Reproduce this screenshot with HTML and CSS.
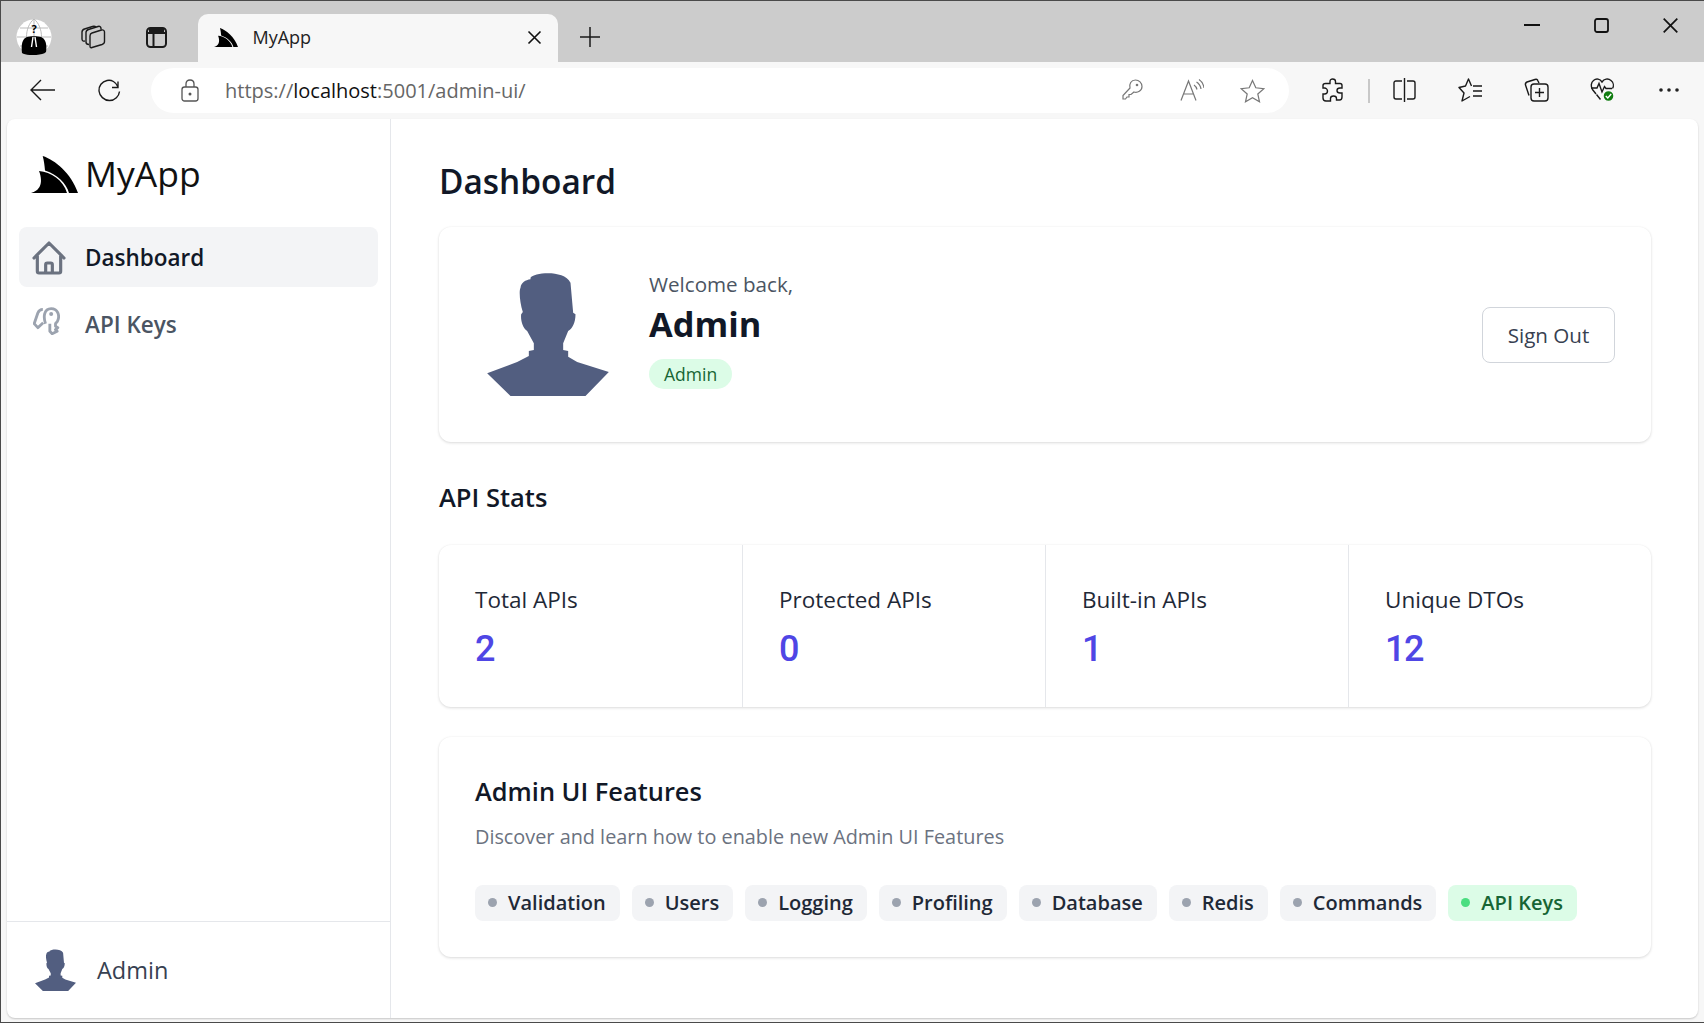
FILE: index.html
```html
<!DOCTYPE html>
<html lang="en">
<head>
  <meta charset="UTF-8">
  <title>MyApp</title>
  <link rel="stylesheet" href="styles.css">
</head>
<body>
  <svg class="defs" width="0" height="0">
    <symbol id="shark" viewBox="0 0 47 37">
      <path d="M11.7 0C24 4 40 17 47 37H38C35 27 27 19 14 14.5C13.5 9 13 5 11.7 0Z"/>
      <path d="M8 15C20 16 32 24 36 37H0C8 35 13 28 8 15Z"/>
    </symbol>
    <symbol id="person" viewBox="170 158 365 372">
      <path d="M300 175C310 160 400 150 420 190L428 280L435 285C435 310 425 330 413 335L398 372V392L413 395V412L440 428L535 458L465 530H240L170 462L260 428L295 410V395L310 392V372L290 335C275 325 270 300 272 285L277 278C268 250 265 215 270 205C272 190 285 182 300 180Z"/>
    </symbol>
  </svg>

  <div class="window">
    <!-- tab strip -->
    <div class="tabstrip">
      <div class="strip-btn">
        <svg width="36" height="36" viewBox="0 0 36 36">
          <circle cx="18" cy="18" r="17.5" fill="#fff"/>
          <path d="M1 18H35M4 9H32M4 27H32M18 0V36M18 0C8 8 8 28 18 36M18 0C28 8 28 28 18 36" fill="none" stroke="#bbb" stroke-width="1"/>
          <path d="M6 34C5 26 6 20 11 18C14 17 22 17 25 18C30 20 31 26 30 33C26 37 10 37 6 34Z" fill="#000"/>
          <path d="M17 18L15.500 28M19 18L20.500 28" stroke="#fff" stroke-width="1.400"/>
          <text x="18" y="14" class="fav-q">?</text>
        </svg>
      </div>
      <div class="strip-btn shift-more">
        <svg width="25" height="24" viewBox="0 0 25 24" class="line">
          <path d="M11 22.500L21 19.500C22.500 19 23.500 18 23.500 16.500V7C23.500 5.500 22 4.500 20.500 5L11 8C9.500 8.500 9 9.500 9 11V21C9 22.500 9.500 23 11 22.500Z"/>
          <path d="M20 4.500V3.500C20 1.500 18.500 1 17 1.500L7.500 4.500C6 5 5 6 5 7.500V17C5 18.500 6 19.500 8 19.500"/>
          <path d="M15 2.300C14 1 13 1 11.500 1.500L3.500 4C2 4.500 1 5.500 1 7V14C1 15.500 2 16.500 4 16"/>
        </svg>
      </div>
      <div class="strip-btn shift-less">
        <svg width="21" height="21" viewBox="0 0 21 21" class="line thick">
          <rect x="1" y="1" width="19" height="19" rx="3.500"/>
          <path d="M7.500 6V20M1 6H20"/>
          <path d="M3 2H18V5H3Z" fill="#1a1a1a" stroke="none"/>
        </svg>
      </div>
      <div class="tab">
        <svg class="tab-logo" width="24" height="19"><use href="#shark"/></svg>
        <span class="tab-title">MyApp</span>
        <svg class="tab-close" width="15" height="15" viewBox="0 0 15 15"><path d="M1.500 1.500L13.500 13.500M13.500 1.500L1.500 13.500" stroke="#111" stroke-width="1.600"/></svg>
      </div>
      <div class="new-tab">
        <svg width="20" height="20" viewBox="0 0 20 20"><path d="M10 0V20M0 10H20" stroke="#1a1a1a" stroke-width="1.500"/></svg>
      </div>
      <div class="win-controls">
        <div class="win-btn"><svg width="16" height="2"><rect width="16" height="2" fill="#111"/></svg></div>
        <div class="win-btn"><svg width="15" height="15" viewBox="0 0 15 15"><rect x="1" y="1" width="13" height="13" rx="2" fill="none" stroke="#111" stroke-width="1.800"/></svg></div>
        <div class="win-btn"><svg width="15" height="15" viewBox="0 0 15 15"><path d="M.7.7L14.300 14.300M14.300.7L.7 14.300" stroke="#111" stroke-width="1.700"/></svg></div>
      </div>
    </div>

    <!-- address bar -->
    <div class="toolbar">
      <div class="tool-btn">
        <svg width="25" height="22" viewBox="0 0 25 22" class="line back"><path d="M25 11H1.500M11 1L1 11L11 21"/></svg>
      </div>
      <div class="tool-btn">
        <svg width="25" height="25" viewBox="0 0 25 25" class="line"><path d="M21 4.500V10.500H15M21 10C19 5 14.500 2.500 10 3.500C5 4.500 1.500 9 2 14C2.500 19 7 23.500 12.500 23.500C18 23.500 22 19 22.500 14.500"/></svg>
      </div>
      <div class="address">
        <svg class="lock" width="18" height="23" viewBox="0 0 18 23"><path d="M5 8V5C5 2.500 6.500 1 9 1C11.500 1 13 2.500 13 5V8" fill="none" stroke="#555" stroke-width="1.300"/><rect x="1" y="8" width="16" height="14" rx="2.500" fill="none" stroke="#555" stroke-width="1.300"/><circle cx="9" cy="15" r="1.500" fill="#555"/></svg>
        <div class="url">https://<span class="host">localhost</span>:5001/admin-ui/</div>
        <div class="addr-icons">
          <div class="addr-btn">
            <svg width="21" height="21" viewBox="0 0 21 21" class="line gray"><path d="M8 9C7 5 9 1 13.500 1C17 1 20 4 20 7.500C20 12 15.500 14 12 13L9 15.500H7V18H5L3.500 20H1V16.500L8 9Z"/><circle cx="15" cy="6" r="1.300" fill="#777" stroke="none"/></svg>
          </div>
          <div class="addr-btn">
            <svg width="24" height="22" viewBox="0 0 24 22" class="line gray"><path d="M1 21.500L8.500 2L16 21.500M3.500 15H13.500"/><path d="M14 6C15.500 7 16.500 8.500 17 10.500M16.500 3C19 4.500 20.500 7 21 10M19 .5C22 2.500 23.500 5.500 24 9"/></svg>
          </div>
          <div class="addr-btn">
            <svg width="25" height="24" viewBox="0 0 25 24" class="line gray"><path d="M12.500 1.500L15.800 8.800L23.800 9.700L17.800 15L19.500 22.800L12.500 18.800L5.500 22.800L7.200 15L1.200 9.700L9.200 8.800Z"/></svg>
          </div>
        </div>
      </div>
      <div class="tool-btn first">
        <svg width="23" height="24" viewBox="0 0 23 24" class="line"><path d="M9 3.500C9 1.500 10.500 1 11.500 1C13 1 14.500 2 14.500 3.500V5.500H19C20.500 5.500 21 6.500 21 7.500V10H19C17 10 16 11 16 12.500C16 14 17 15 19 15H21V19C21 21 20 22 18.500 22H15.500V20.500C15.500 19 14 18 12.500 18C11 18 9.500 19 9.500 20.500V23H5C3 23 2 22 2 20V16H3.500C5 16 6.500 15 6.500 13C6.500 11.500 5 10 3.500 10H2V7.500C2 6.500 3 5.500 4.500 5.500H9Z"/></svg>
      </div>
      <div class="tool-sep"></div>
      <div class="tool-btn">
        <svg width="23" height="24" viewBox="0 0 23 24" class="line"><path d="M9 3H3C1.500 3 1 4 1 5V19C1 20 1.500 21 3 21H9M14 3H20C21.500 3 22 4 22 5V19C22 20 21.500 21 20 21H14M11.500 0V24"/></svg>
      </div>
      <div class="tool-btn">
        <svg width="25" height="24" viewBox="0 0 25 24" class="line"><path d="M13.500 8L10.500 1L7.500 8L1 9.500L6 15L4 23L12 18.500" stroke-linejoin="round"/><path d="M15 8H24M15 13H24M15 18H24"/></svg>
      </div>
      <div class="tool-btn">
        <svg width="25" height="24" viewBox="0 0 25 24" class="line"><path d="M5 17.500L1.500 7C1 5.500 2 4.500 3 4L11 1.500C12.500 1 13.500 1.500 14 3L15 5"/><rect x="7" y="6" width="17" height="17" rx="3"/><path d="M15.500 10V19M11 14.500H20"/></svg>
      </div>
      <div class="tool-btn">
        <svg width="25" height="25" viewBox="0 0 25 25" class="line"><path d="M6 17L2.500 12.500C.5 9.500 1 5.500 3.500 3.500C6.500 1 10 2 12 5C14 2 18 1 21 3.500C23.500 5.500 24 9 22.500 11.500"/><path d="M1 11H7L9 6.500L12 15L14.500 9.500L16 11.500H22M6.500 17.500L10.500 22.500"/><circle cx="18.500" cy="19" r="5.500" fill="#107c10" stroke="#f7f7f7"/><path d="M15.800 19L17.800 21L21.200 17" stroke="#fff" stroke-width="1.400"/></svg>
      </div>
      <div class="tool-btn">
        <svg width="20" height="4" viewBox="0 0 20 4" class="dots"><circle cx="2" cy="2" r="1.800" fill="#222"/><circle cx="10" cy="2" r="1.800" fill="#222"/><circle cx="18" cy="2" r="1.800" fill="#222"/></svg>
      </div>
    </div>

    <!-- page -->
    <div class="page-wrap">
      <div class="page">
        <aside class="sidebar">
          <div class="brand">
            <svg class="brand-logo" width="47" height="37"><use href="#shark"/></svg>
            <span class="brand-name">MyApp</span>
          </div>
          <nav class="nav">
            <a class="nav-item active">
              <span class="nav-icon">
                <svg width="40" height="40" viewBox="0 0 24 24" fill="none" stroke="#6b7280" stroke-width="1.900" stroke-linecap="round" stroke-linejoin="round"><path d="M3 12l2-2m0 0l7-7 7 7M5 10v10a1 1 0 001 1h3m10-11l2 2m-2-2v10a1 1 0 01-1 1h-3m-6 0a1 1 0 001-1v-4a1 1 0 011-1h2a1 1 0 011 1v4a1 1 0 001 1m-6 0h6"/></svg>
              </span>
              Dashboard
            </a>
            <a class="nav-item">
              <span class="nav-icon keys">
                <svg width="27" height="28" viewBox="98 560 80 84" fill="none" stroke="#9ca3af" stroke-width="8.500" stroke-linejoin="round"><path d="M135 610C128 590 130 565 152 565C172 565 178 585 172 600C170 607 165 608 165 610V618L172 622L165 628L170 633L155 640L148 633V610"/><path d="M127 567C120 567 115 570 112 578L101 610L112 622L128 607"/><circle cx="152" cy="581" r="6" fill="#9ca3af" stroke="none"/></svg>
              </span>
              API Keys
            </a>
          </nav>
          <div class="side-user">
            <svg class="person-small" width="41" height="42"><use href="#person"/></svg>
            <span>Admin</span>
          </div>
        </aside>

        <main class="main">
          <h1 class="page-title">Dashboard</h1>

          <section class="card welcome">
            <svg class="person-big" width="122" height="124"><use href="#person"/></svg>
            <div class="welcome-text">
              <div class="welcome-back">Welcome back,</div>
              <div class="welcome-name">Admin</div>
              <span class="badge">Admin</span>
            </div>
            <button class="sign-out">Sign Out</button>
          </section>

          <h2 class="section-title">API Stats</h2>
          <section class="card stats">
            <div class="stat"><div class="stat-label">Total APIs</div><div class="stat-value">2</div></div>
            <div class="stat"><div class="stat-label">Protected APIs</div><div class="stat-value">0</div></div>
            <div class="stat"><div class="stat-label">Built-in APIs</div><div class="stat-value">1</div></div>
            <div class="stat"><div class="stat-label">Unique DTOs</div><div class="stat-value">12</div></div>
          </section>

          <section class="card features">
            <h3 class="features-title">Admin UI Features</h3>
            <p class="features-desc">Discover and learn how to enable new Admin UI Features</p>
            <div class="pills">
              <span class="pill">Validation</span>
              <span class="pill">Users</span>
              <span class="pill">Logging</span>
              <span class="pill">Profiling</span>
              <span class="pill">Database</span>
              <span class="pill">Redis</span>
              <span class="pill">Commands</span>
              <span class="pill on">API Keys</span>
            </div>
          </section>
        </main>
      </div>
    </div>
  </div>
</body>
</html>
```

FILE: styles.css
```css
* {
  box-sizing: border-box;
}
html, body {
  margin: 0;
  height: 100%;
  overflow: hidden;
}
body {
  font-family: "Open Sans", "Noto Sans", sans-serif;
  color: #111827;
  background: #f7f7f7;
}
.defs {
  position: absolute;
}
.window {
  position: relative;
  width: 1704px;
  height: 1023px;
  display: flex;
  flex-direction: column;
  background: #f7f7f7;
}
/* thin dark window frame */
.window::after {
  content: "";
  position: absolute;
  inset: 0;
  border: 1px solid #4a4a4a;
  border-right: none;
  pointer-events: none;
}
.line {
  fill: none;
  stroke: #1a1a1a;
  stroke-width: 1.400;
}
.line.thick {
  stroke-width: 2;
}
.line.gray {
  stroke: #777;
  stroke-width: 1.200;
}

/* tab strip */
.tabstrip {
  height: 62px;
  background: #cccccc;
  display: flex;
  align-items: flex-end;
  padding-left: 4px;
}
.strip-btn {
  width: 60px;
  height: 46px;
  margin-right: 1.500px;
  margin-bottom: 2px;
  display: flex;
  align-items: center;
  justify-content: center;
}
.strip-btn.shift-more svg {
  margin-left: -4px;
}
.strip-btn.shift-less svg {
  margin-left: -1px;
}
.fav-q {
  font-size: 11px;
  font-weight: 700;
  text-anchor: middle;
  fill: #000;
}
.tab {
  width: 360px;
  height: 48px;
  margin-left: 9px;
  background: #f7f7f7;
  border-radius: 10px 10px 0 0;
  display: flex;
  align-items: center;
  padding: 0 16px 2px 16px;
}
.tab-title {
  margin-left: 15px;
  font-size: 18px;
  color: #222;
}
.tab-close {
  margin-left: auto;
}
.new-tab {
  width: 64px;
  height: 48px;
  padding-bottom: 2px;
  display: flex;
  align-items: center;
  justify-content: center;
}
.win-controls {
  margin-left: auto;
  display: flex;
  align-self: flex-start;
  padding-top: 1px;
}
.win-btn {
  width: 69px;
  height: 48px;
  padding-left: 1px;
  display: flex;
  align-items: center;
  justify-content: center;
}

/* toolbar */
.toolbar {
  height: 57px;
  padding: 6px 0 6px 10px;
  display: flex;
  align-items: flex-start;
}
.tool-btn {
  width: 66px;
  height: 43px;
  display: flex;
  align-items: center;
  justify-content: center;
}
.tool-btn .back {
  margin-left: -2px;
}
.tool-btn .dots {
  margin-left: 2px;
}
.tool-btn.first {
  margin-left: 10px;
}
.tool-sep {
  width: 2px;
  height: 24px;
  margin: 11px 1px 0 3px;
  background: #c8c8c8;
}
.address {
  width: 1138px;
  height: 45px;
  margin-left: 9px;
  background: #fff;
  border-radius: 23px;
  display: flex;
  align-items: center;
  padding: 0 7px 0 30px;
}
.url {
  margin-left: 26px;
  font-size: 20px;
  color: #666;
}
.host {
  color: #111;
}
.addr-icons {
  margin-left: auto;
  display: flex;
}
.addr-btn {
  width: 60px;
  display: flex;
  justify-content: center;
}

/* page */
.page-wrap {
  flex: 1;
  padding: 0 6px 5px 7px;
  min-height: 0;
}
.page {
  height: 100%;
  background: #fff;
  border-radius: 8px;
  box-shadow: 0 1px 2px rgba(0, 0, 0, 0.2);
  display: flex;
}
.sidebar {
  width: 384px;
  border-right: 1px solid #e5e7eb;
  display: flex;
  flex-direction: column;
}
.brand {
  height: 108px;
  display: flex;
  align-items: center;
  padding-left: 24px;
}
.brand-logo {
  margin-top: 2px;
}
.brand-name {
  margin-left: 7px;
  font-size: 35.500px;
  color: #111;
}
.nav {
  padding: 0 12px;
}
.nav-item {
  height: 60px;
  margin-bottom: 7px;
  padding-left: 15px;
  border-radius: 8px;
  display: flex;
  align-items: center;
  font-size: 22.500px;
  font-weight: 600;
  color: #4b5563;
}
.nav-item.active {
  background: #f3f4f6;
  color: #111827;
  padding-top: 1px;
}
.nav-icon {
  width: 30px;
  margin-right: 21px;
  display: flex;
  align-items: center;
  justify-content: center;
}
.nav-icon svg {
  flex: none;
}
.nav-icon.keys {
  margin-top: -7px;
  margin-left: -3px;
  margin-right: 24px;
}
.side-user {
  margin-top: auto;
  height: 97px;
  border-top: 1px solid #e5e7eb;
  padding-left: 28px;
  display: flex;
  align-items: center;
  font-size: 23.500px;
  font-weight: 500;
  color: #374151;
}
.person-small {
  margin-right: 21px;
  fill: #525e80;
}
.person-big {
  fill: #525e80;
  flex: none;
  margin-top: -1px;
}

.main {
  flex: 1;
  padding: 38px 47px 0 48px;
}
.page-title {
  margin: 0;
  font-size: 33.400px;
  line-height: 48px;
  font-weight: 600;
  color: #111827;
}
.card {
  background: #fff;
  border-radius: 12px;
  box-shadow: 0 1px 3px rgba(0, 0, 0, 0.14), 0 0 2px rgba(0, 0, 0, 0.04);
}
.welcome {
  margin-top: 22px;
  height: 215px;
  padding: 0 36px 0 48px;
  display: flex;
  align-items: center;
}
.welcome-text {
  margin-left: 40px;
  padding-bottom: 10px;
}
.welcome-back {
  margin-top: -1px;
  font-size: 20.600px;
  line-height: 28px;
  font-weight: 500;
  color: #4b5563;
}
.welcome-name {
  margin-top: 4px;
  margin-bottom: 2px;
  font-size: 34.400px;
  line-height: 44px;
  font-weight: 700;
  color: #111827;
}
.badge {
  display: inline-block;
  margin-top: 11px;
  height: 30px;
  line-height: 30px;
  padding: 0 15px;
  border-radius: 15px;
  background: #dcfce7;
  color: #166534;
  font-size: 17.500px;
  font-weight: 500;
}
.sign-out {
  margin-left: auto;
  width: 133px;
  height: 56px;
  background: #fff;
  border: 1px solid #d1d5db;
  border-radius: 8px;
  font-family: inherit;
  font-size: 20.600px;
  font-weight: 500;
  color: #374151;
}
.section-title {
  margin: 37px 0 0;
  font-size: 25.500px;
  line-height: 36px;
  font-weight: 600;
  color: #111827;
}
.stats {
  margin-top: 30px;
  height: 162px;
  display: grid;
  grid-template-columns: repeat(4, 1fr);
}
.stat {
  padding: 39px 36px 0;
  border-left: 1px solid #e5e7eb;
}
.stat:first-child {
  border-left: none;
}
.stat-label {
  font-size: 22.500px;
  line-height: 32px;
  color: #1f2937;
}
.stat-value {
  margin-top: 11px;
  font-family: Roboto, "Open Sans", sans-serif;
  font-size: 36px;
  line-height: 44px;
  font-weight: 500;
  letter-spacing: -1.500px;
  color: #4f46e5;
}
.features {
  margin-top: 30px;
  height: 220px;
  padding: 36px;
}
.features-title {
  margin: 0;
  font-size: 25.400px;
  line-height: 36px;
  font-weight: 600;
  color: #111827;
}
.features-desc {
  margin: 14px 0 0;
  font-size: 19.850px;
  line-height: 28px;
  color: #6b7280;
}
.pills {
  margin-top: 34px;
  display: flex;
  gap: 12px;
}
.pill {
  height: 36px;
  padding: 0 14px 0 33px;
  border-radius: 8px;
  background: #f3f4f6;
  position: relative;
  font-size: 20px;
  line-height: 36px;
  font-weight: 600;
  color: #1f2937;
}
.pill::before {
  content: "";
  position: absolute;
  left: 13px;
  top: 13px;
  width: 9px;
  height: 9px;
  border-radius: 50%;
  background: #9ca3af;
}
.pill.on {
  background: #dcfce7;
  color: #166534;
}
.pill.on::before {
  background: #4ade80;
}
```
